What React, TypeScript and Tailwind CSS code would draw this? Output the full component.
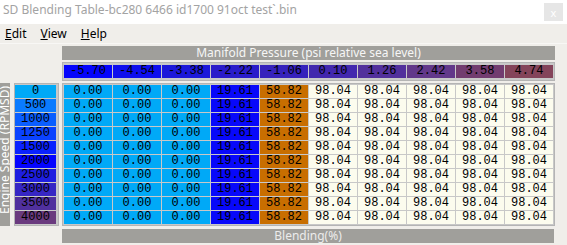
import React from "react";

const pressures = [
  { v: "-5.70", bg: "bg-[#0404fc]" },
  { v: "-4.54", bg: "bg-[#0e0eee]" },
  { v: "-3.38", bg: "bg-[#1c18da]" },
  { v: "-2.22", bg: "bg-[#2a1cca]" },
  { v: "-1.06", bg: "bg-[#3622bc]" },
  { v: "0.10", bg: "bg-[#4228ae]" },
  { v: "1.26", bg: "bg-[#52309c]" },
  { v: "2.42", bg: "bg-[#62388a]" },
  { v: "3.58", bg: "bg-[#723c70]" },
  { v: "4.74", bg: "bg-[#84445a]" },
];

const rpms = [
  { v: "0", bg: "bg-[#00a9f7]" },
  { v: "500", bg: "bg-[#0a7bff]" },
  { v: "1000", bg: "bg-[#0a5eff]" },
  { v: "1250", bg: "bg-[#0a42ff]" },
  { v: "1500", bg: "bg-[#0a22ff]" },
  { v: "2000", bg: "bg-[#0404ff]" },
  { v: "2500", bg: "bg-[#1e1ee0]" },
  { v: "3000", bg: "bg-[#3626c4]" },
  { v: "3500", bg: "bg-[#50309e]" },
  { v: "4000", bg: "bg-[#6a3a7e]" },
];

// one row of blending values, same for every rpm
const row = [
  { v: "0.00", bg: "bg-[#00a9f7]" },
  { v: "0.00", bg: "bg-[#00a9f7]" },
  { v: "0.00", bg: "bg-[#00a9f7]" },
  { v: "19.61", bg: "bg-[#0808fa]" },
  { v: "58.82", bg: "bg-[#c86e00]" },
  { v: "98.04", bg: "bg-[#fcfcee]" },
  { v: "98.04", bg: "bg-[#fcfcee]" },
  { v: "98.04", bg: "bg-[#fcfcee]" },
  { v: "98.04", bg: "bg-[#fcfcee]" },
  { v: "98.04", bg: "bg-[#fcfcee]" },
];

const ui = "font-['Noto_Sans','Liberation_Sans',sans-serif]";
const mono = "font-['Liberation_Mono',monospace] text-[12px] leading-[13px] text-black";

export default function App() {
  return (
    <div className={`w-[567px] h-[245px] overflow-hidden bg-[#f0eeea] ${ui}`}>
      {/* Title bar */}
      <div className="h-[24px] bg-white flex items-start justify-between">
        <div className="pl-[3px] pt-[2px] text-[12px] leading-[16px] text-[#a3a3a3]">
          SD Blending Table-bc280 6466 id1700 91oct test`.bin
        </div>
        <div className="mt-[3px] mr-[4px] w-[19px] h-[18px] bg-[#e6e6e6] flex items-center justify-center text-[11px] leading-none text-white">
          x
        </div>
      </div>

      {/* Menu bar */}
      <div className="h-[20px] flex items-center text-[12px] text-black border-b border-[#f8f7f5]">
        <span className="ml-[5px]"><u>E</u>dit</span>
        <span className="ml-[14px]"><u>V</u>iew</span>
        <span className="ml-[14px]"><u>H</u>elp</span>
      </div>

      {/* Table area */}
      <div className="pt-[2px] flex flex-col">
        <div className="ml-[62px] w-[493px] h-[14px] bg-[#a09f9b] text-[#f6f6f6] text-[12px] leading-[14px] text-center">
          Manifold Pressure (psi relative sea level)
        </div>

        <div className="ml-[62px] mt-[2px] w-[493px] border border-[#b4b4b4] bg-[#c8c8c8] px-[1px] py-[2px] grid grid-cols-[repeat(10,48px)] gap-[1px]">
          {pressures.map((p, i) => (
            <div key={i} className={`${p.bg} ${mono} h-[13px] text-center`}>{p.v}</div>
          ))}
        </div>

        <div className="mt-[2px] flex">
          {/* vertical axis label */}
          <div className="w-[10px] h-[143px] bg-[#a09f9b] overflow-hidden relative">
            <div className="absolute left-[-55px] top-[64px] w-[120px] h-[14px] -rotate-90 text-[12px] leading-[14px] text-white text-center whitespace-nowrap">
              Engine Speed (RPMSD)
            </div>
          </div>

          {/* rpm column */}
          <div className="ml-[4px] w-[45px] h-[143px] border border-[#b4b4b4] bg-[#c8c8c8] pl-0 pr-[1px] py-[1px] flex flex-col gap-[1px]">
            {rpms.map((r, i) => (
              <div key={i} className={`${r.bg} ${mono} h-[13px] w-[41px] text-center`}>{r.v}</div>
            ))}
          </div>

          {/* values */}
          <div className="ml-[3px] w-[493px] h-[143px] border border-[#b4b4b4] bg-[#c8c8c8] p-[1px] grid grid-cols-[repeat(10,48px)] auto-rows-[13px] gap-[1px]">
            {rpms.map((_, r) =>
              row.map((c, i) => (
                <div key={`${r}-${i}`} className={`${c.bg} ${mono} text-center`}>{c.v}</div>
              ))
            )}
          </div>
        </div>

        <div className="ml-[62px] mt-[3px] w-[492px] h-[14px] bg-[#a09f9b] text-[#ececec] text-[12px] leading-[14px] text-center">
          Blending(%)
        </div>
      </div>
    </div>
  );
}
